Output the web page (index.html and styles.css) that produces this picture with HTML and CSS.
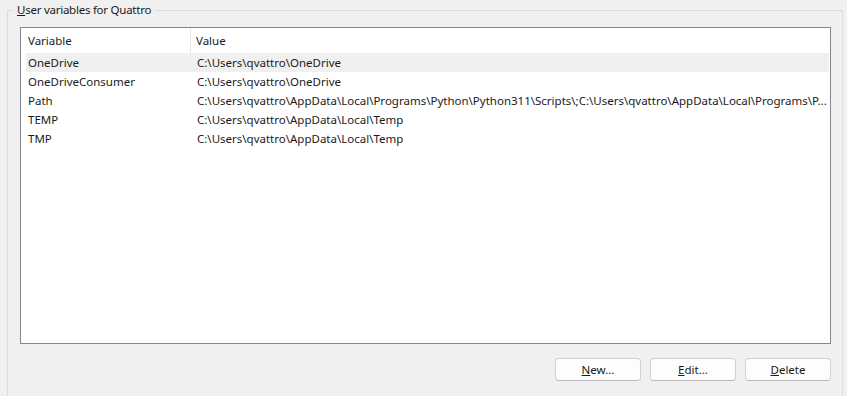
FILE: index.html
```html
<!DOCTYPE html>
<html lang="en">
<head>
<meta charset="utf-8">
<title>User variables</title>
<link rel="stylesheet" href="styles.css">
</head>
<body>
<div class="group">
  <div class="group-title"><u>U</u>ser variables for Quattro</div>
  <div class="listview">
    <div class="header">
      <div class="col col-name">Variable</div>
      <div class="col col-value">Value</div>
    </div>
    <div class="rows">
      <div class="row selected"><div class="cell cell-name">OneDrive</div><div class="cell cell-value">C:\Users\qvattro\OneDrive</div></div>
      <div class="row"><div class="cell cell-name">OneDriveConsumer</div><div class="cell cell-value">C:\Users\qvattro\OneDrive</div></div>
      <div class="row"><div class="cell cell-name">Path</div><div class="cell cell-value">C:\Users\qvattro\AppData\Local\Programs\Python\Python311\Scripts\;C:\Users\qvattro\AppData\Local\Programs\P...</div></div>
      <div class="row"><div class="cell cell-name">TEMP</div><div class="cell cell-value">C:\Users\qvattro\AppData\Local\Temp</div></div>
      <div class="row"><div class="cell cell-name">TMP</div><div class="cell cell-value">C:\Users\qvattro\AppData\Local\Temp</div></div>
    </div>
  </div>
  <div class="buttons">
    <button class="btn"><u>N</u>ew...</button>
    <button class="btn"><u>E</u>dit...</button>
    <button class="btn"><u>D</u>elete</button>
  </div>
</div>
</body>
</html>
```

FILE: styles.css
```css
html, body {
  margin: 0;
  padding: 0;
  background: #f0f0f0;
  font-family: "Noto Sans", "DejaVu Sans", sans-serif;
  font-size: 11.5px;
  color: #1a1a1a;
  overflow: hidden;
}

.group {
  margin: 10px 0 0 7px;
  width: 836px;
  height: 400px;
  border: 1px solid #dcdcdc;
  border-bottom: none;
  box-sizing: border-box;
}

.group-title {
  width: fit-content;
  margin: -9px 0 0 6px;
  padding: 0 3px;
  height: 16px;
  line-height: 16px;
  background: #f0f0f0;
  white-space: nowrap;
  letter-spacing: -0.25px;
}

.listview {
  margin: 9px 0 0 12px;
  width: 811px;
  height: 317px;
  box-sizing: border-box;
  border: 1px solid #828790;
  background: #ffffff;
  overflow: hidden;
}

.header {
  display: flex;
  height: 25px;
  margin-right: 1px;
}

.col {
  line-height: 25px;
  white-space: nowrap;
}

.col-name {
  width: 162px;
  padding-left: 7px;
  border-right: 1px solid #e5e5e5;
}

.col-value {
  padding-left: 5px;
}

.rows {
  margin: 0 1px 0 5px;
}

.row {
  display: flex;
  height: 19px;
  line-height: 19px;
  white-space: nowrap;
}

.row.selected {
  background: #f0f0f0;
}

.cell-name {
  width: 169px;
  padding-left: 2px;
  flex: none;
}

.cell-value {
  overflow: hidden;
  text-overflow: ellipsis;
  flex: 1;
  min-width: 0;
}

.buttons {
  display: flex;
  justify-content: flex-end;
  gap: 9px;
  margin: 14px 11px 0 0;
}

.btn {
  width: 86px;
  height: 23px;
  box-sizing: border-box;
  background: #fdfdfd;
  border: 1px solid #d0d0d0;
  border-bottom-color: #b8b8b8;
  border-radius: 4px;
  font-family: inherit;
  font-size: 11.5px;
  color: #1a1a1a;
  padding: 0;
  line-height: 20px;
}
```
